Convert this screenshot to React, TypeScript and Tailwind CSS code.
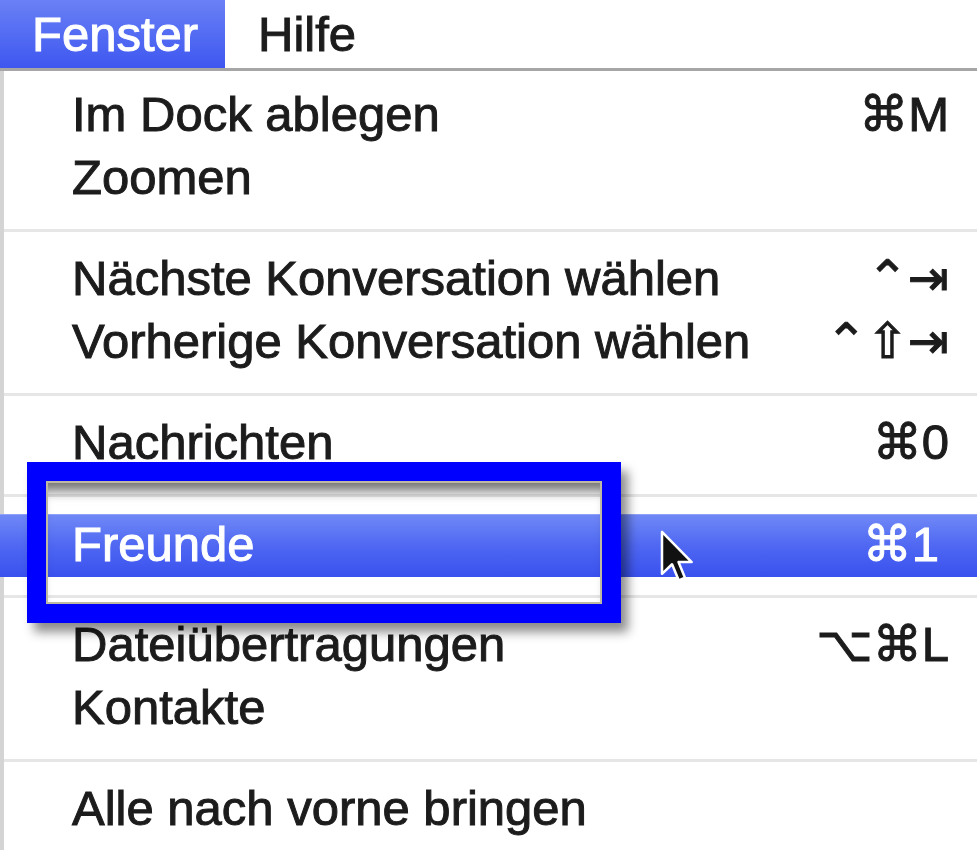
import React from "react";

type Item = { label: string; keys?: string; active?: boolean };

const groups: Item[][] = [
  [{ label: "Im Dock ablegen", keys: "⌘M" }, { label: "Zoomen" }],
  [
    { label: "Nächste Konversation wählen", keys: "⌃⇥" },
    { label: "Vorherige Konversation wählen", keys: "⌃⇧⇥" },
  ],
  [{ label: "Nachrichten", keys: "⌘0" }],
  [{ label: "Freunde", keys: "⌘1", active: true }],
  [{ label: "Dateiübertragungen", keys: "⌥⌘L" }, { label: "Kontakte" }],
  [{ label: "Alle nach vorne bringen" }],
];

const Row = ({ item }: { item: Item }) => {
  if (item.active) {
    return (
      <div className="-ml-[4px] h-[63px] flex items-center justify-between pl-[72px] pr-[38px] pb-[4px] text-white bg-gradient-to-b from-[#7088f6] via-[#4f67f2] to-[#3a50ee] border-t border-[#8ea0f8]">
        <span>{item.label}</span>
        <span>{item.keys}</span>
      </div>
    );
  }
  return (
    <div className="h-[63px] flex items-center justify-between pl-[68px] pr-[28px] pb-[4px] text-[#1c1c1c]">
      <span>{item.label}</span>
      {item.keys && <span>{item.keys}</span>}
    </div>
  );
};

const Cursor = () => (
  <svg width="34" height="56" viewBox="0 0 12 20" className="absolute left-[659px] top-[529px]">
    <path
      d="M1 1 L1 16 L4.6 12.6 L7 18.4 L9.2 17.4 L6.9 11.8 L11.6 11.8 Z"
      fill="#111"
      stroke="#fff"
      strokeWidth="0.9"
      strokeLinejoin="round"
    />
  </svg>
);

export default function App() {
  return (
    <div className="relative w-[977px] h-[850px] overflow-hidden bg-white font-['Liberation_Sans','DejaVu_Sans',sans-serif] text-[49px] leading-none [-webkit-text-stroke:1px_currentColor]">
      {/* menu bar */}
      <div className="h-[71px] flex border-b-[3px] border-[#a6a6a6] bg-white">
        <div className="w-[225px] flex items-center pl-[32px] text-white bg-gradient-to-b from-[#6a80f5] to-[#3f56f0]">
          Fenster
        </div>
        <div className="flex items-center pl-[33px] text-[#1c1c1c]">Hilfe</div>
      </div>

      {/* menu */}
      <div className="border-l-[4px] border-[#d4d4d4] pt-[14px] h-full">
        {groups.map((g, gi) => (
          <div key={gi}>
            {gi > 0 && (
              <div className="h-[38px] flex items-center">
                <div className="h-[3px] w-full bg-[#e6e6e6]" />
              </div>
            )}
            {g.map((it) => (
              <Row key={it.label} item={it} />
            ))}
          </div>
        ))}
      </div>

      {/* annotation box */}
      <div className="absolute left-[27px] top-[462px] w-[594px] h-[161px] border-[19px] border-[#0000ff] shadow-[7px_9px_10px_rgba(0,0,0,0.45),inset_0_16px_12px_-6px_rgba(0,0,0,0.55)]">
        <div className="absolute inset-0 border-2 border-[#bdb9a3]" />
      </div>

      <Cursor />
    </div>
  );
}
